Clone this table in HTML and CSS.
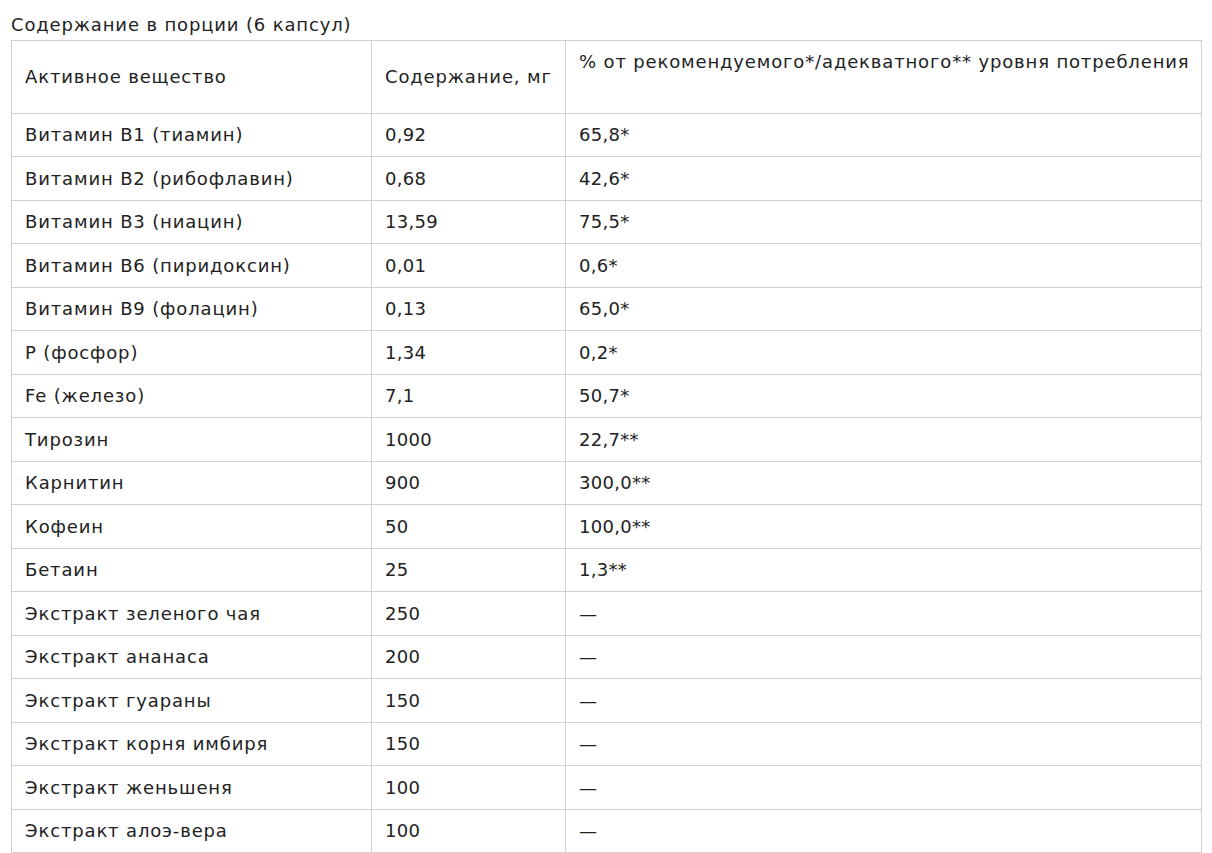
FILE: index.html
```html
<!DOCTYPE html>
<html lang="ru">
<head>
<meta charset="utf-8">
<title>Содержание в порции</title>
<link rel="stylesheet" href="styles.css">
</head>
<body>
<div class="page">
  <p class="caption">Содержание в порции (6 капсул)</p>
  <table class="comp">
    <colgroup>
      <col class="c1"><col class="c2"><col class="c3">
    </colgroup>
    <thead>
      <tr>
        <th>Активное вещество</th>
        <th>Содержание, мг</th>
        <th class="top">% от рекомендуемого*/адекватного** уровня потребления</th>
      </tr>
    </thead>
    <tbody>
      <tr><td>Витамин В1 (тиамин)</td><td class="num">0,92</td><td class="num">65,8*</td></tr>
      <tr><td>Витамин В2 (рибофлавин)</td><td class="num">0,68</td><td class="num">42,6*</td></tr>
      <tr><td>Витамин В3 (ниацин)</td><td class="num">13,59</td><td class="num">75,5*</td></tr>
      <tr><td>Витамин В6 (пиридоксин)</td><td class="num">0,01</td><td class="num">0,6*</td></tr>
      <tr><td>Витамин В9 (фолацин)</td><td class="num">0,13</td><td class="num">65,0*</td></tr>
      <tr><td>P (фосфор)</td><td class="num">1,34</td><td class="num">0,2*</td></tr>
      <tr><td>Fe (железо)</td><td class="num">7,1</td><td class="num">50,7*</td></tr>
      <tr><td>Тирозин</td><td class="num">1000</td><td class="num">22,7**</td></tr>
      <tr><td>Карнитин</td><td class="num">900</td><td class="num">300,0**</td></tr>
      <tr><td>Кофеин</td><td class="num">50</td><td class="num">100,0**</td></tr>
      <tr><td>Бетаин</td><td class="num">25</td><td class="num">1,3**</td></tr>
      <tr><td>Экстракт зеленого чая</td><td class="num">250</td><td class="num">—</td></tr>
      <tr><td>Экстракт ананаса</td><td class="num">200</td><td class="num">—</td></tr>
      <tr><td>Экстракт гуараны</td><td class="num">150</td><td class="num">—</td></tr>
      <tr><td>Экстракт корня имбиря</td><td class="num">150</td><td class="num">—</td></tr>
      <tr><td>Экстракт женьшеня</td><td class="num">100</td><td class="num">—</td></tr>
      <tr><td>Экстракт алоэ-вера</td><td class="num">100</td><td class="num">—</td></tr>
    </tbody>
  </table>
</div>
</body>
</html>
```
FILE: styles.css
```css
html, body {
  margin: 0;
  padding: 0;
  background: #ffffff;
}
body {
  font-family: "DejaVu Sans", "Noto Sans", sans-serif;
  color: #222222;
  font-size: 18px;
  letter-spacing: 0.85px;
}
.page {
  padding: 11px 11px 0 11px;
}
.caption {
  margin: 0;
  height: 29px;
  line-height: 27px;
  font-size: 18px;
}
.comp {
  width: 1190px;
  border-collapse: collapse;
  table-layout: fixed;
}
.c1 { width: 360px; }
.c2 { width: 194px; }
.c3 { width: 636px; }
.comp th,
.comp td {
  border: 1px solid #d0d0d0;
  padding: 7.75px 13px;
  line-height: 27px;
  text-align: left;
  font-weight: normal;
  vertical-align: middle;
  white-space: nowrap;
}
.comp td.num {
  letter-spacing: 0.3px;
}
.comp th {
  height: 56px;
}
.comp th.top {
  vertical-align: top;
  padding-top: 7px;
}
```
